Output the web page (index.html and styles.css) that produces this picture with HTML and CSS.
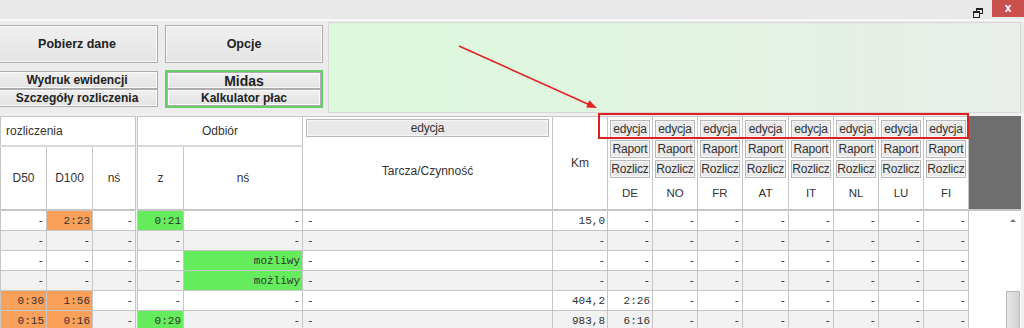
FILE: index.html
```html
<!DOCTYPE html>
<html lang="pl">
  <head>
    <meta charset="UTF-8" />
    <title>Ewidencja</title>
    <link rel="stylesheet" href="styles.css">
  </head>
  <body>
    <div class="window">
      <div class="titlebar">
        <span class="restore">
          <svg width="10" height="10" viewBox="0 0 10 10">
            <rect x="3.5" y="0.5" width="6" height="5" fill="none" stroke="#222" />
            <rect x="3.5" y="0.5" width="6" height="1.5" fill="#222" />
            <rect x="0.5" y="3.5" width="6" height="6" fill="#e8e8e8" stroke="#222" />
            <rect x="0.5" y="3.5" width="6" height="1.5" fill="#222" />
          </svg>
        </span>
        <span class="close">x</span>
      </div>

      <div class="toolbar">
        <div class="btn-area">
          <div class="btn-row top">
            <button class="btn big first">Pobierz dane</button>
            <button class="btn big">Opcje</button>
          </div>
          <div class="btn-row bottom">
            <div class="stack first">
              <button class="btn small">Wydruk ewidencji</button>
              <button class="btn small">Szczegóły rozliczenia</button>
            </div>
            <div class="stack midas">
              <button class="btn small midas-top">Midas</button>
              <button class="btn small">Kalkulator płac</button>
            </div>
          </div>
        </div>
        <div class="panel"></div>
      </div>

      <table class="grid">
        <colgroup>
          <col style="width:46px" /><col style="width:46px" /><col style="width:44px" />
          <col style="width:47px" /><col style="width:119px" />
          <col style="width:250px" /><col style="width:55px" />
          <col style="width:45px" /><col style="width:45px" /><col style="width:45px" />
          <col style="width:46px" /><col style="width:45px" /><col style="width:45px" />
          <col style="width:45px" /><col style="width:45px" />
          <col style="width:52px" />
        </colgroup>
        <thead>
          <tr class="head-a">
            <th colspan="3" class="group clip">rozliczenia</th>
            <th colspan="2" class="group sep">Odbiór</th>
            <th rowspan="2" class="tarcza">
              <div class="cell-stack">
                <span class="mini wide">edycja</span>
                <span class="label">Tarcza/Czynność</span>
              </div>
            </th>
            <th rowspan="2" class="km">Km</th>
            <th rowspan="2" class="country"><div class="cell-stack"><span class="mini">edycja</span><span class="mini">Raport</span><span class="mini">Rozlicz</span><span class="label">DE</span></div></th>
            <th rowspan="2" class="country"><div class="cell-stack"><span class="mini">edycja</span><span class="mini">Raport</span><span class="mini">Rozlicz</span><span class="label">NO</span></div></th>
            <th rowspan="2" class="country"><div class="cell-stack"><span class="mini">edycja</span><span class="mini">Raport</span><span class="mini">Rozlicz</span><span class="label">FR</span></div></th>
            <th rowspan="2" class="country"><div class="cell-stack"><span class="mini">edycja</span><span class="mini">Raport</span><span class="mini">Rozlicz</span><span class="label">AT</span></div></th>
            <th rowspan="2" class="country"><div class="cell-stack"><span class="mini">edycja</span><span class="mini">Raport</span><span class="mini">Rozlicz</span><span class="label">IT</span></div></th>
            <th rowspan="2" class="country"><div class="cell-stack"><span class="mini">edycja</span><span class="mini">Raport</span><span class="mini">Rozlicz</span><span class="label">NL</span></div></th>
            <th rowspan="2" class="country"><div class="cell-stack"><span class="mini">edycja</span><span class="mini">Raport</span><span class="mini">Rozlicz</span><span class="label">LU</span></div></th>
            <th rowspan="2" class="country"><div class="cell-stack"><span class="mini">edycja</span><span class="mini">Raport</span><span class="mini">Rozlicz</span><span class="label">FI</span></div></th>
            <th rowspan="2" class="dark"></th>
          </tr>
          <tr class="head-b">
            <th>D50</th>
            <th>D100</th>
            <th>nś</th>
            <th class="sep">z</th>
            <th>nś</th>
          </tr>
        </thead>
        <tbody>
          <tr>
            <td>-</td><td class="orange">2:23</td><td>-</td><td class="green sep">0:21</td><td>-</td>
            <td class="left">-</td><td>15,0</td>
            <td>-</td><td>-</td><td>-</td><td>-</td><td>-</td><td>-</td><td>-</td><td>-</td>
            <td rowspan="6" class="scroll-cell">
              <div class="scrollbar">
                <span class="arrow-up"></span>
                <span class="thumb"></span>
              </div>
            </td>
          </tr>
          <tr class="alt">
            <td>-</td><td>-</td><td>-</td><td class="sep">-</td><td>-</td>
            <td class="left">-</td><td>-</td>
            <td>-</td><td>-</td><td>-</td><td>-</td><td>-</td><td>-</td><td>-</td><td>-</td>
          </tr>
          <tr>
            <td>-</td><td>-</td><td>-</td><td class="sep">-</td><td class="green">możliwy</td>
            <td class="left">-</td><td>-</td>
            <td>-</td><td>-</td><td>-</td><td>-</td><td>-</td><td>-</td><td>-</td><td>-</td>
          </tr>
          <tr class="alt">
            <td>-</td><td>-</td><td>-</td><td class="sep">-</td><td class="green">możliwy</td>
            <td class="left">-</td><td>-</td>
            <td>-</td><td>-</td><td>-</td><td>-</td><td>-</td><td>-</td><td>-</td><td>-</td>
          </tr>
          <tr>
            <td class="orange">0:30</td><td class="orange">1:56</td><td>-</td><td class="sep">-</td><td>-</td>
            <td class="left">-</td><td>404,2</td>
            <td>2:26</td><td>-</td><td>-</td><td>-</td><td>-</td><td>-</td><td>-</td><td>-</td>
          </tr>
          <tr class="alt">
            <td class="orange">0:15</td><td class="orange">0:16</td><td>-</td><td class="green sep">0:29</td><td>-</td>
            <td class="left">-</td><td>983,8</td>
            <td>6:16</td><td>-</td><td>-</td><td>-</td><td>-</td><td>-</td><td>-</td><td>-</td>
          </tr>
        </tbody>
      </table>

      <!-- adnotacja: strzałka i ramka -->
      <svg class="note-arrow" width="1024" height="328" viewBox="0 0 1024 328">
        <line x1="459" y1="46" x2="590" y2="105" stroke="#e52222" stroke-width="1.6" />
        <polygon points="597,108 589.3,100.2 586.2,107.4" fill="#e52222" />
      </svg>
      <div class="note-box"></div>
    </div>
  </body>
</html>
```

FILE: styles.css
```css
body {
  margin: 0;
  padding: 0;
  background: #f0f0f0;
  font-family: "Liberation Sans", Arial, sans-serif;
  color: #333;
  overflow: hidden;
}
.window {
  position: relative;
  width: 1024px;
  height: 328px;
  overflow: hidden;
}

/* pasek tytułu */
.titlebar {
  height: 19px;
  background: #e9e9e9;
  border-bottom: 2px solid #f7f7f7;
  display: flex;
  justify-content: flex-end;
  align-items: flex-start;
}
.titlebar .restore {
  width: 10px;
  height: 10px;
  margin: 4px 9px 0 0;
}
.titlebar .close {
  width: 32px;
  height: 17px;
  background: #c9504f;
  color: #fff;
  font-size: 12px;
  font-weight: bold;
  text-align: center;
  line-height: 16px;
}

/* przyciski */
.toolbar {
  display: flex;
  height: 92px;
  background: #ececec;
}
.btn-area {
  width: 323px;
  display: flex;
  flex-direction: column;
}
.btn-row {
  display: flex;
  gap: 7px;
}
.btn-row.top {
  margin-top: 4px;
  height: 38px;
}
.btn-row.bottom {
  margin-top: 7px;
  height: 38px;
}
.btn {
  margin: 0;
  padding: 0;
  font-family: "Liberation Sans", Arial, sans-serif;
  font-weight: bold;
  color: #222;
  background: linear-gradient(#f0f0f0, #e3e3e3);
  border: 1px solid #adadad;
  box-shadow: inset 0 0 0 1px #fafafa;
}
.btn.big {
  width: 158px;
  font-size: 12.5px;
}
.btn.big.first {
  margin-left: -4px;
  width: 162px;
}
.stack {
  display: flex;
  flex-direction: column;
  width: 158px;
}
.stack.first {
  margin-left: -4px;
  width: 163px;
  padding-top: 1px;
}
.stack .btn.small {
  height: 18px;
  font-size: 12px;
}
.stack.midas {
  width: 155px;
  border: 2px solid #66cc66;
}
.stack.midas .btn.small {
  height: 17px;
}
.stack.midas .midas-top {
  font-size: 14px;
}
.panel {
  flex: 1;
  margin: 1px 3px 0 5px;
  border: 1px solid #d6d6d6;
  background: linear-gradient(90deg, #dcf9dc 0%, #e0f5e0 40%, #e6efe6 80%, #e9eee9 100%);
}

/* tabela */
.grid {
  margin-top: 3px;
  width: 1020px;
  table-layout: fixed;
  border-collapse: collapse;
  font-size: 12px;
}
.grid th {
  background: #fff;
  border: 1px solid #c6c6c6;
  font-weight: normal;
  color: #333;
  padding: 0;
  overflow: hidden;
}
.head-a {
  height: 29px;
}
.head-b {
  height: 63px;
}
.grid th.group {
  border-bottom: 2px solid #d8d8d8;
}
.grid th.clip {
  text-align: left;
  white-space: nowrap;
  padding-left: 5px;
}
.grid .sep {
  border-left: 3px double #c6c6c6;
}
.grid th.tarcza,
.grid th.country {
  vertical-align: top;
}
.cell-stack {
  display: flex;
  flex-direction: column;
  align-items: stretch;
  height: 92px;
  box-sizing: border-box;
  padding: 3px 2px 0 2px;
  gap: 2px;
}
.tarcza .cell-stack {
  padding: 2px 3px 0 3px;
}
.mini {
  height: 16px;
  line-height: 16px;
  background: #e9e9e9;
  border: 1px solid #b9b9b9;
  box-shadow: inset 0 0 0 1px #f6f6f6;
  font-size: 12px;
  color: #333;
  text-align: center;
  letter-spacing: -0.2px;
}
.cell-stack .label {
  flex: 1;
  display: flex;
  align-items: center;
  justify-content: center;
}
.tarcza .label {
  padding-bottom: 6px;
}
.country .label {
  font-size: 11.5px;
  padding-bottom: 4px;
}
.grid th.dark {
  background: #6e6e6e;
  border-color: #6e6e6e;
}

.grid td {
  height: 19px;
  padding: 0 2px;
  border: 1px solid #c6c6c6;
  background: #fff;
  font-family: "Liberation Mono", "Courier New", monospace;
  font-size: 11px;
  color: #333;
  text-align: right;
  white-space: nowrap;
  overflow: hidden;
}
.grid tbody tr:first-child td {
  border-top: 2px solid #c6c6c6;
}
.grid tr.alt td {
  background: #f1f1f1;
}
.grid td.left {
  text-align: left;
  padding-left: 4px;
}
.grid td.orange,
.grid tr.alt td.orange {
  background: #f9a05a;
}
.grid td.green,
.grid tr.alt td.green {
  background: #64ec5c;
}
.grid td.scroll-cell,
.grid tr.alt td.scroll-cell {
  background: #fff;
  border: none;
  padding: 0;
  vertical-align: top;
}
.scrollbar {
  position: relative;
  height: 120px;
  margin-left: 36px;
  width: 15px;
  background: #fff;
}
.arrow-up {
  position: absolute;
  left: 5px;
  top: 8px;
  width: 0;
  height: 0;
  border-left: 3px solid transparent;
  border-right: 3px solid transparent;
  border-bottom: 3px solid #777;
}
.thumb {
  position: absolute;
  left: 1px;
  top: 80px;
  width: 12px;
  height: 45px;
  background: linear-gradient(90deg, #e6e6e6, #d2d2d2);
  border: 1px solid #b8b8b8;
}

/* adnotacja */
.note-arrow {
  position: absolute;
  left: 0;
  top: 0;
  pointer-events: none;
}
.note-box {
  position: absolute;
  left: 598px;
  top: 113px;
  width: 367px;
  height: 22px;
  border: 2px solid #e02020;
}
```
